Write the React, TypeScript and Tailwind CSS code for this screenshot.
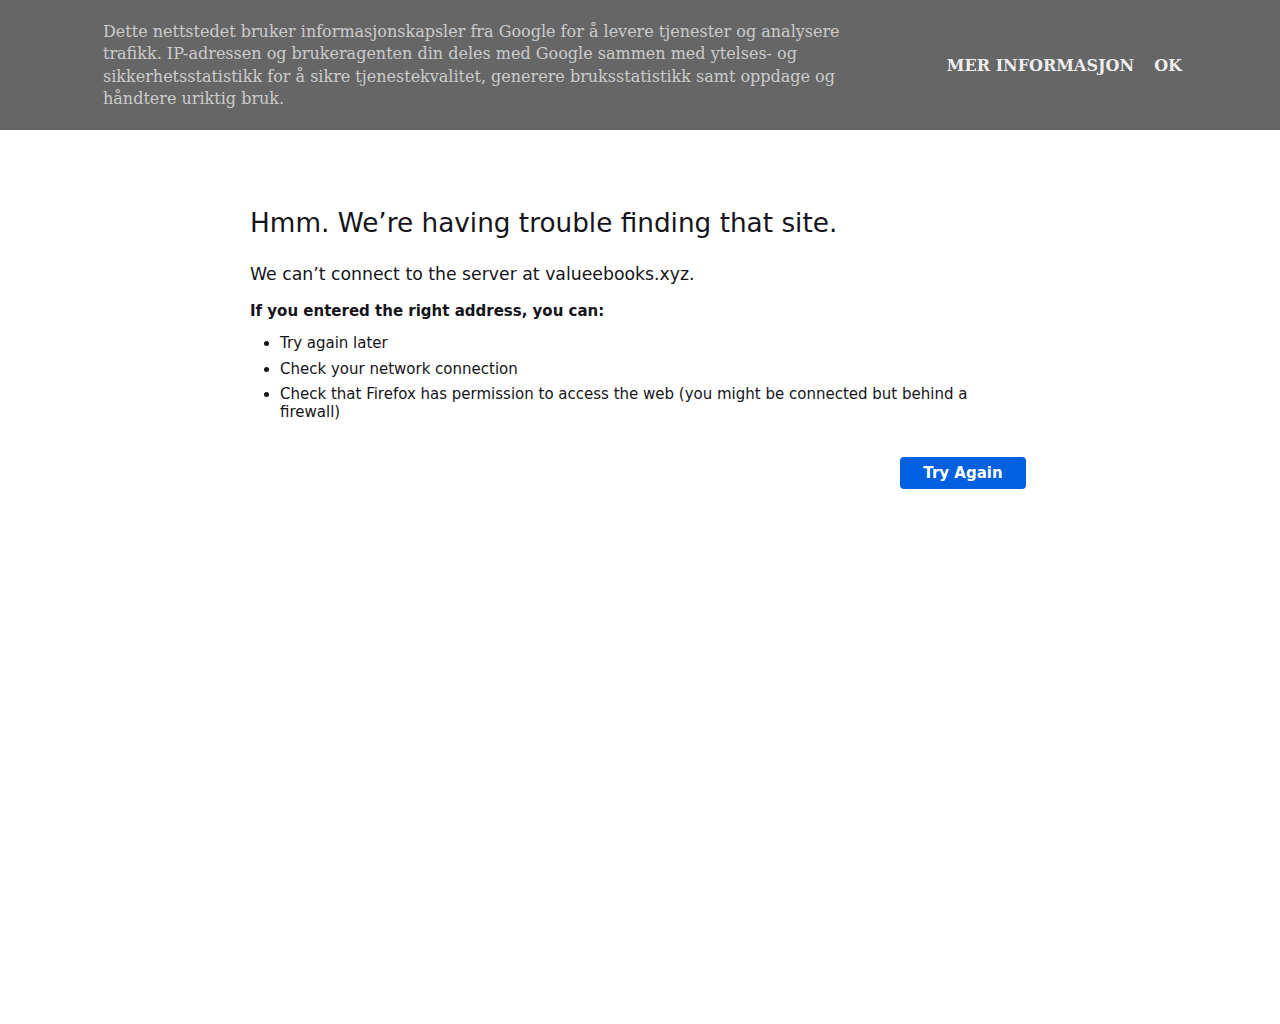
import React from 'react';

const App: React.FC = () => {
  return (
    <div className="min-h-screen bg-white">
      {/* Cookie banner */}
      <div className="h-[130px] bg-[#666666] flex items-center">
        <div className="w-full pl-[103px] pr-[98px] flex items-center justify-between" style={{ fontFamily: '"DejaVu Serif", serif' }}>
          <p className="w-[745px] text-[16px] leading-[22.5px] text-[#cccccc] mt-[1px]">
            Dette nettstedet bruker informasjonskapsler fra Google for å levere tjenester og analysere trafikk. IP-adressen og brukeragenten din deles med Google sammen med ytelses- og sikkerhetsstatistikk for å sikre tjenestekvalitet, generere bruksstatistikk samt oppdage og håndtere uriktig bruk.
          </p>
          <div className="flex items-center gap-[20px] text-[16px] font-bold text-[#eeeeee] mt-[2px]">
            <span>MER INFORMASJON</span>
            <span>OK</span>
          </div>
        </div>
      </div>

      {/* Error page */}
      <div className="w-[776px] ml-[250px] pt-[75px] text-[#15141a]" style={{ fontFamily: '"DejaVu Sans", sans-serif' }}>
        <h1 className="text-[26.3px] leading-[36px] font-normal">Hmm. We’re having trouble finding that site.</h1>
        <p className="mt-[21px] text-[17.3px] leading-[24px]">We can’t connect to the server at valueebooks.xyz.</p>
        <p className="mt-[15px] text-[15px] leading-[20px] font-bold">If you entered the right address, you can:</p>
        <ul className="mt-[13px] pl-[30px] list-disc text-[15px] leading-[18px] space-y-[7.5px]">
          <li>Try again later</li>
          <li>Check your network connection</li>
          <li>Check that Firefox has permission to access the web (you might be connected but behind a firewall)</li>
        </ul>
        <div className="mt-[36px] flex justify-end">
          <button className="w-[126px] h-[32px] rounded-[4px] bg-[#0060df] text-white text-[15px] font-bold">Try Again</button>
        </div>
      </div>
    </div>
  );
};

export default App;
